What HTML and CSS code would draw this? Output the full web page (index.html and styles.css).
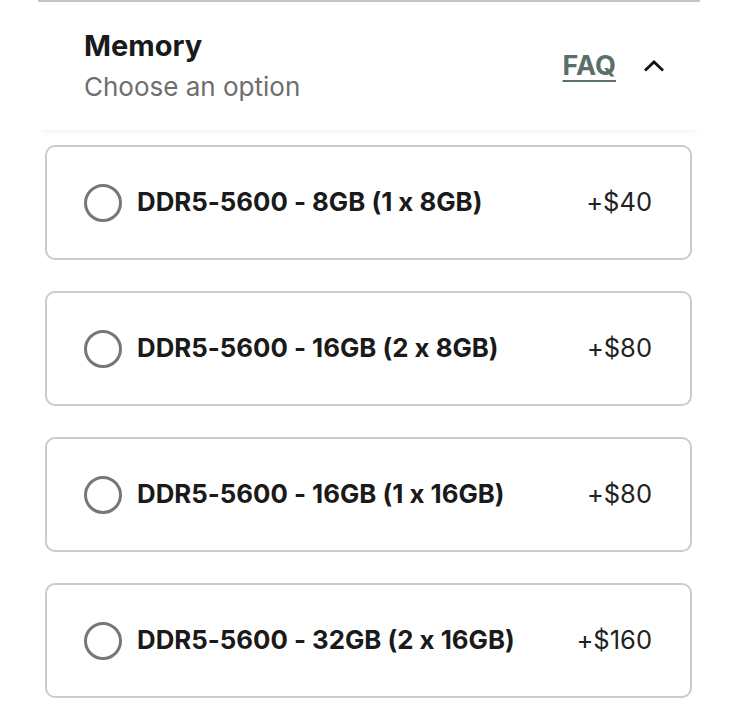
FILE: index.html
```html
<!DOCTYPE html>
<html lang="en">
<head>
  <meta charset="utf-8">
  <title>Memory</title>
  <link rel="stylesheet" href="styles.css">
</head>
<body>
  <div class="panel">
    <div class="header">
      <div class="titles">
        <h2>Memory</h2>
        <p class="subtitle">Choose an option</p>
      </div>
      <div class="actions">
        <a href="#" class="faq">FAQ</a>
        <svg class="chevron" width="24" height="24" viewBox="0 0 24 24">
          <path d="M3 16.5 L12 8 L21 16.5" fill="none" stroke="#111" stroke-width="2.8"/>
        </svg>
      </div>
    </div>
    <div class="options">
      <label class="option">
        <span class="radio"></span>
        <span class="name">DDR5-5600 - 8GB (1 x 8GB)</span>
        <span class="price">+$40</span>
      </label>
      <label class="option">
        <span class="radio"></span>
        <span class="name">DDR5-5600 - 16GB (2 x 8GB)</span>
        <span class="price">+$80</span>
      </label>
      <label class="option">
        <span class="radio"></span>
        <span class="name">DDR5-5600 - 16GB (1 x 16GB)</span>
        <span class="price">+$80</span>
      </label>
      <label class="option">
        <span class="radio"></span>
        <span class="name">DDR5-5600 - 32GB (2 x 16GB)</span>
        <span class="price">+$160</span>
      </label>
    </div>
  </div>
</body>
</html>
```

FILE: styles.css
```css
body {
  font-family: Inter, "Noto Sans", Arial, sans-serif;
  font-feature-settings: "calt" 0;
  margin: 0;
  color: #1a1a1a;
  background-color: #fff;
}

.panel {
  width: 662px;
  margin: 0 0 0 38px;
  border-top: 2px solid #c4c4c4;
}

.header {
  display: flex;
  justify-content: space-between;
  align-items: flex-start;
  padding: 28px 34px 0 46px;
  height: 128px;
  box-sizing: border-box;
  box-shadow: 0 6px 6px -4px rgba(0, 0, 0, 0.06);
}

h2 {
  font-size: 29px;
  font-weight: 700;
  margin: 0;
  line-height: 32px;
}

.subtitle {
  font-size: 26px;
  color: #6e6e6e;
  margin: 10px 0 0;
  line-height: 30px;
}

.actions {
  display: flex;
  align-items: center;
  gap: 26px;
  margin-top: 20px;
}

.faq {
  font-size: 27px;
  font-weight: 700;
  line-height: 32px;
  color: #5b6f6a;
  text-decoration: underline;
  text-underline-offset: 5px;
  text-decoration-thickness: 2px;
}

.options {
  display: flex;
  flex-direction: column;
  gap: 31px;
  padding: 15px 8px 0 7px;
}

.option {
  display: flex;
  align-items: center;
  height: 115px;
  box-sizing: border-box;
  padding: 0 38px 0 37px;
  border: 2px solid #cbcbcb;
  border-radius: 10px;
}

.radio {
  width: 32px;
  height: 32px;
  border: 3px solid #777;
  border-radius: 50%;
  flex-shrink: 0;
}

.name {
  margin-left: 15px;
  margin-top: -3px;
  font-size: 25.8px;
  font-weight: 700;
  flex: 1;
}

.price {
  margin-top: -3px;
  font-size: 25.5px;
  color: #222;
}
```
